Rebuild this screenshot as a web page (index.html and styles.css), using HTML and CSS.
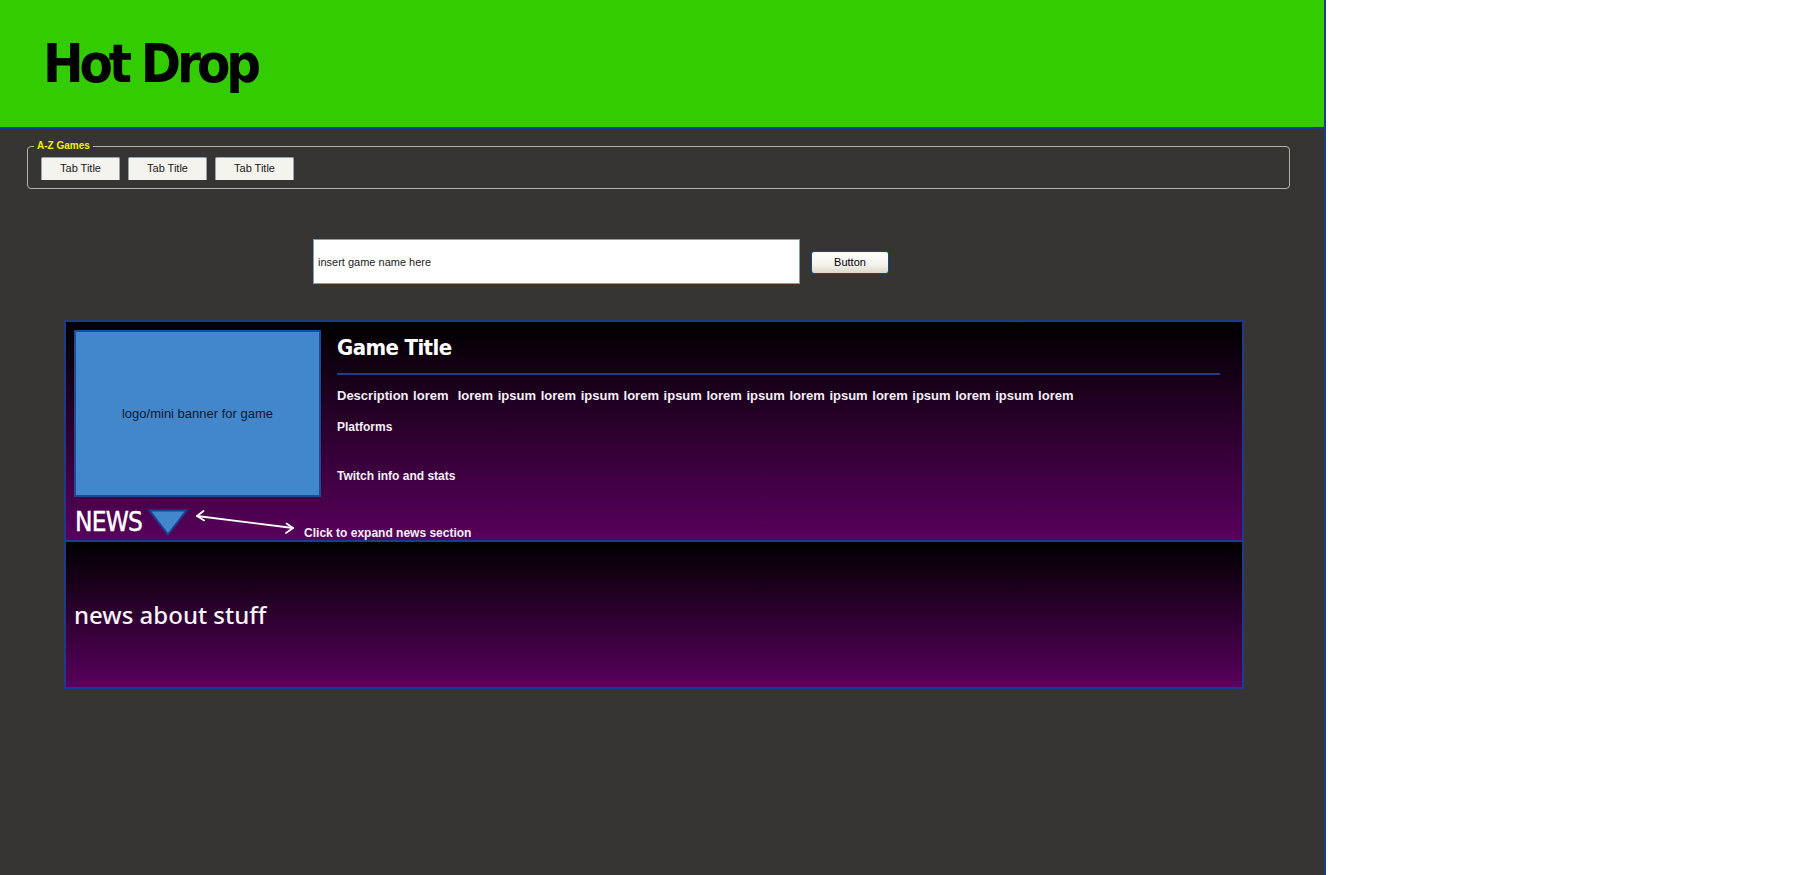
FILE: index.html
```html
<!DOCTYPE html>
<html lang="en">
<head>
<meta charset="utf-8">
<title>Hot Drop</title>
<link rel="stylesheet" href="styles.css">
</head>
<body>
<div class="page">
  <header class="header">
    <h1 class="brand">Hot Drop</h1>
  </header>

  <fieldset class="az">
    <legend class="az-legend">A-Z Games</legend>
    <div class="tabs">
      <div class="tab">Tab Title</div>
      <div class="tab">Tab Title</div>
      <div class="tab">Tab Title</div>
    </div>
  </fieldset>

  <div class="search">
    <div class="search-box">insert game name here</div>
    <div class="btn">Button</div>
  </div>

  <section class="card">
    <div class="card-top">
      <div class="card-main">
        <div class="logo">logo/mini banner for game</div>
        <div class="info">
          <h2 class="game-title">Game Title</h2>
          <div class="rule"></div>
          <p class="desc">Description lorem &nbsp;lorem ipsum lorem ipsum lorem ipsum lorem ipsum lorem ipsum lorem ipsum lorem ipsum lorem</p>
          <p class="platforms">Platforms</p>
          <p class="twitch">Twitch info and stats</p>
        </div>
      </div>
      <div class="news-bar">
        <span class="news-label">NEWS</span>
        <svg class="tri" width="40" height="27" viewBox="0 0 40 27">
          <polygon points="1.5,1.5 38.5,1.5 20,25.5" fill="#4287cc" stroke="#1f3f8f" stroke-width="2" stroke-linejoin="miter"/>
        </svg>
        <svg class="arrow" width="102" height="28" viewBox="0 0 102 28">
          <g fill="none" stroke="#ffffff" stroke-width="1.8" stroke-linecap="round" stroke-linejoin="round">
            <line x1="3" y1="8" x2="99" y2="20"/>
            <polyline points="9.5,3 3,8 10.2,12.4"/>
            <polyline points="92.5,15.6 99,20 92,25"/>
          </g>
        </svg>
        <span class="news-hint">Click to expand news section</span>
      </div>
    </div>
    <div class="card-news">
      <p class="news-text">news about stuff</p>
    </div>
  </section>
</div>
</body>
</html>
```

FILE: styles.css
```css
html, body {
  margin: 0;
  padding: 0;
  background: #ffffff;
}

.page {
  width: 1324px;
  min-height: 875px;
  background: #363533;
  border-right: 2px solid #1e3a8a;
  overflow: hidden;
}

.header {
  box-sizing: content-box;
  height: 89px;
  background: #33cc00;
  border-bottom: 2px solid #1e3a8a;
  padding: 38px 0 0 43px;
}

.brand {
  margin: 0;
  font-family: "DejaVu Sans Condensed", "DejaVu Sans", sans-serif;
  font-stretch: condensed;
  font-weight: bold;
  font-size: 54px;
  line-height: 52px;
  letter-spacing: -4.1px;
  color: #000000;
}

.az {
  box-sizing: border-box;
  width: 1263px;
  margin: 11px 0 0 27px;
  padding: 0 0 8px 13px;
  border: 1px solid #b8b3a0;
  border-radius: 4px;
}

.az-legend {
  margin-left: -7px;
  padding: 0 3px;
  font-family: "Liberation Sans", Arial, sans-serif;
  font-weight: bold;
  font-size: 10px;
  line-height: 12px;
  color: #f2f000;
}

.tabs {
  display: flex;
  gap: 8px;
  margin-top: 5px;
}

.tab {
  box-sizing: border-box;
  width: 79px;
  height: 23px;
  background: #f4f3ee;
  border: 1px solid #98a4ae;
  border-bottom: none;
  border-radius: 2px 2px 0 0;
  font-family: "Liberation Sans", Arial, sans-serif;
  font-size: 11px;
  line-height: 21px;
  text-align: center;
  color: #1a1a1a;
}

.search {
  display: flex;
  align-items: center;
  margin-top: 50px;
  padding-left: 313px;
}

.search-box {
  box-sizing: border-box;
  width: 487px;
  height: 45px;
  background: #ffffff;
  border: 1px solid #7f9db9;
  padding-left: 4px;
  font-family: "Liberation Sans", Arial, sans-serif;
  font-size: 11px;
  line-height: 45px;
  color: #222222;
}

.btn {
  box-sizing: border-box;
  width: 78px;
  height: 23px;
  margin-left: 11px;
  margin-top: 2px;
  border: 1px solid #16478a;
  border-radius: 3px;
  background: linear-gradient(#ffffff, #f3f2ec 60%, #dcd9c9);
  font-family: "Liberation Sans", Arial, sans-serif;
  font-size: 11px;
  line-height: 21px;
  text-align: center;
  color: #000000;
}

.card {
  box-sizing: border-box;
  width: 1180px;
  margin: 36px 0 0 64px;
  border: 2px solid #1e3a8a;
}

.card-top {
  background: linear-gradient(#000000, #58005c);
  border-bottom: 2px solid #1e3a8a;
  padding: 8px 22px 0 8px;
}

.card-main {
  display: flex;
  gap: 16px;
}

.logo {
  box-sizing: border-box;
  flex: none;
  width: 247px;
  height: 167px;
  background: #4287cc;
  border: 2px solid #1f4a96;
  display: flex;
  align-items: center;
  justify-content: center;
  font-family: "Liberation Sans", Arial, sans-serif;
  font-size: 13px;
  color: #14172a;
  padding-bottom: 1px;
}

.info {
  flex: 1;
  color: #ffffff;
}

.game-title {
  margin: 4px 0 0 0;
  font-family: "DejaVu Sans Condensed", "DejaVu Sans", sans-serif;
  font-stretch: condensed;
  font-weight: bold;
  font-size: 22px;
  line-height: 28px;
  letter-spacing: -0.6px;
  color: #ffffff;
}

.rule {
  height: 2px;
  margin-top: 11px;
  background: #1f3c94;
}

.desc,
.platforms,
.twitch {
  margin: 0;
  font-family: "Liberation Sans", Arial, sans-serif;
  font-weight: bold;
  color: #f4f0f6;
}

.desc {
  margin-top: 13px;
  font-size: 13px;
  line-height: 16px;
  word-spacing: 1px;
}

.platforms {
  margin-top: 16px;
  font-size: 12px;
  line-height: 14px;
}

.twitch {
  margin-top: 35px;
  font-size: 12px;
  line-height: 14px;
}

.news-bar {
  display: flex;
  align-items: flex-start;
  height: 43px;
  padding-left: 1px;
}

.news-label {
  margin-top: 13px;
  font-family: "DejaVu Sans Condensed", "DejaVu Sans", sans-serif;
  font-stretch: condensed;
  font-size: 26px;
  line-height: 25px;
  letter-spacing: -0.8px;
  color: #ffffff;
  -webkit-text-stroke: 0.4px #ffffff;
}

.tri {
  flex: none;
  margin: 12px 0 0 6px;
}

.arrow {
  flex: none;
  margin: 11px 0 0 6px;
}

.news-hint {
  margin: 29px 0 0 8px;
  font-family: "Liberation Sans", Arial, sans-serif;
  font-weight: bold;
  font-size: 12px;
  line-height: 14px;
  color: #f4f0f6;
}

.card-news {
  box-sizing: border-box;
  height: 145px;
  background: linear-gradient(#000000, #58005c);
  padding: 57px 0 0 8px;
}

.news-text {
  margin: 0;
  font-family: "Noto Sans", "Open Sans", sans-serif;
  font-weight: 500;
  font-size: 24px;
  line-height: 32px;
  color: #f6f2f8;
}
```
